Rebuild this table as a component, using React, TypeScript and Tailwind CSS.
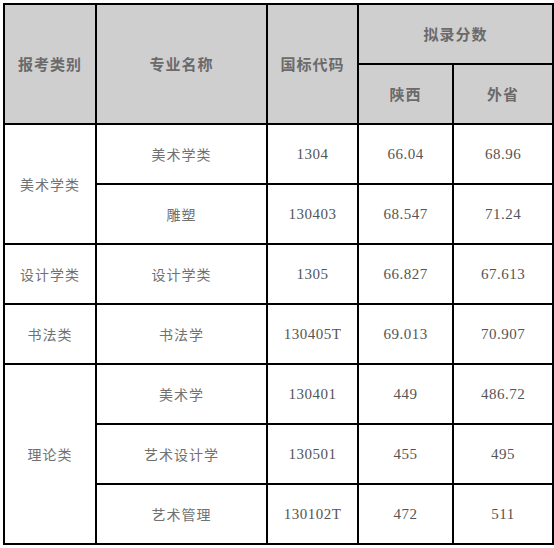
const cjk = "font-['Noto_Sans_CJK_SC',sans-serif]";
const num = "font-['Liberation_Serif','Noto_Sans_CJK_SC',serif]";

type Row = { cat?: string; span?: string; name: string; code: string; sx: string; wx: string };

const rows: Row[] = [
  { cat: "美术学类", span: "row-span-2", name: "美术学类", code: "1304", sx: "66.04", wx: "68.96" },
  { name: "雕塑", code: "130403", sx: "68.547", wx: "71.24" },
  { cat: "设计学类", name: "设计学类", code: "1305", sx: "66.827", wx: "67.613" },
  { cat: "书法类", name: "书法学", code: "130405T", sx: "69.013", wx: "70.907" },
  { cat: "理论类", span: "row-span-3", name: "美术学", code: "130401", sx: "449", wx: "486.72" },
  { name: "艺术设计学", code: "130501", sx: "455", wx: "495" },
  { name: "艺术管理", code: "130102T", sx: "472", wx: "511" },
];

const textCls = `text-[14px] tracking-[1px] text-[#717171] ${cjk}`;
const numCls = `text-[15px] tracking-[0.5px] text-[#555] ${num}`;

function Head({ children, className = "" }: { children: React.ReactNode; className?: string }) {
  return (
    <div
      className={`flex items-center justify-center bg-[#d0cfcf] text-[15px] font-bold tracking-[1px] text-[#6a6a6a] ${cjk} ${className}`}
    >
      {children}
    </div>
  );
}

function Cell({ children, className = "" }: { children: React.ReactNode; className?: string }) {
  return <div className={`flex items-center justify-center bg-white ${className}`}>{children}</div>;
}

export default function App() {
  return (
    <div className="min-h-[548px] w-[554px] bg-white pl-[3px] pt-[3px]">
      <div className="grid w-[551px] grid-cols-[90px_169px_89px_93px_98px] grid-rows-[repeat(9,58px)] gap-[2px] bg-black p-[2px]">
        <Head className="row-span-2">报考类别</Head>
        <Head className="row-span-2">专业名称</Head>
        <Head className="row-span-2">国标代码</Head>
        <Head className="col-span-2">拟录分数</Head>
        <Head className="col-start-4">陕西</Head>
        <Head>外省</Head>
        {rows.map((row, i) => (
          <div key={i} className="contents">
            {row.cat ? (
              <Cell className={`col-start-1 ${row.span ?? ""} ${textCls}`}>{row.cat}</Cell>
            ) : null}
            <Cell className={`col-start-2 ${textCls}`}>{row.name}</Cell>
            <Cell className={numCls}>{row.code}</Cell>
            <Cell className={numCls}>{row.sx}</Cell>
            <Cell className={numCls}>{row.wx}</Cell>
          </div>
        ))}
      </div>
    </div>
  );
}
